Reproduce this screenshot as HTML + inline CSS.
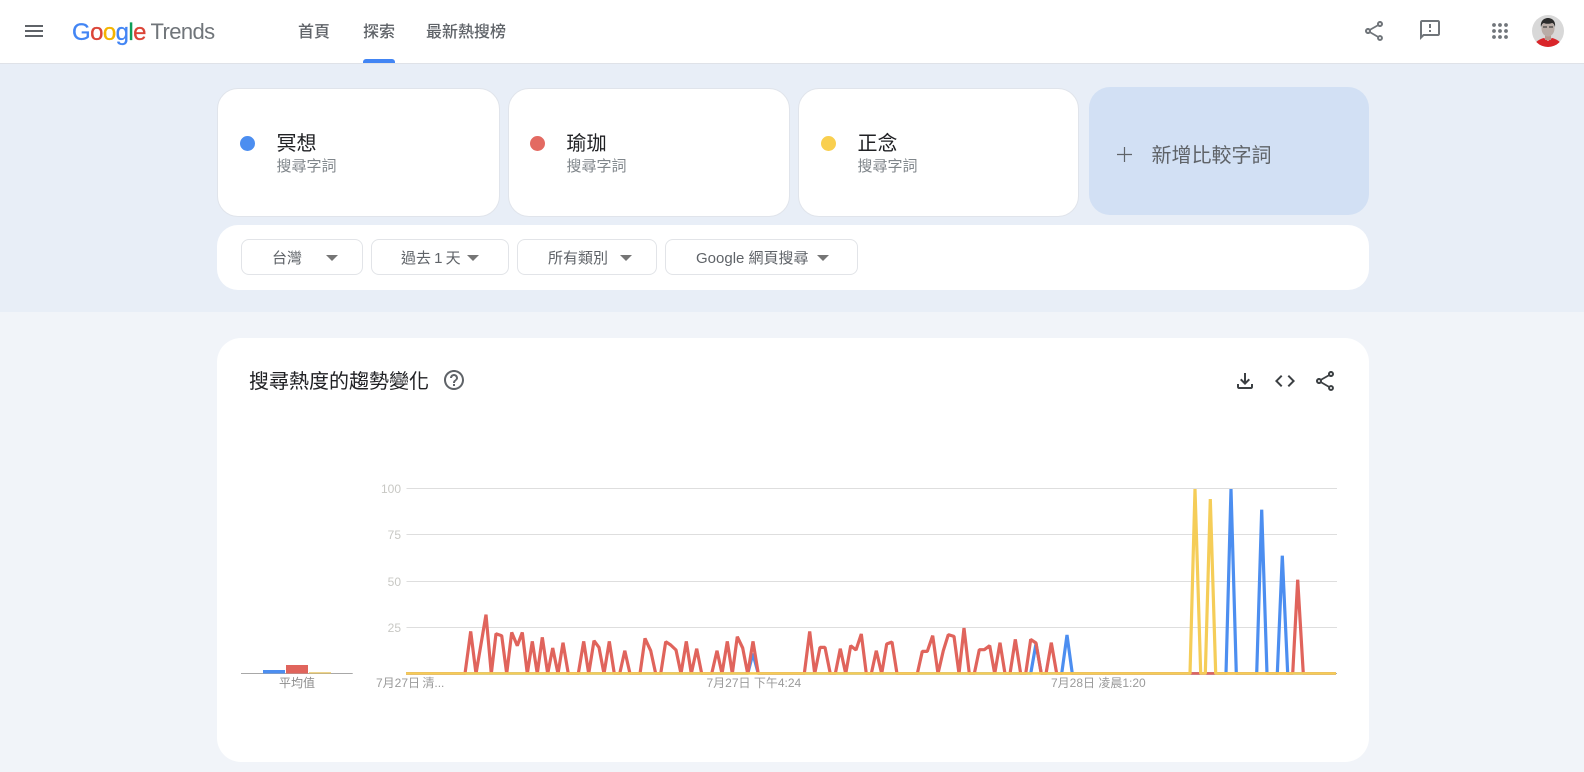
<!DOCTYPE html>
<html lang="zh-Hant"><head><meta charset="utf-8"><title>Google Trends</title>
<style>
html,body{margin:0;padding:0;width:1584px;height:772px;overflow:hidden;background:#f1f4f9;font-family:"Liberation Sans","Noto Sans CJK TC",sans-serif}
div,span{position:absolute;white-space:nowrap}
svg{position:absolute;overflow:visible}
.card{background:#fff;border:1px solid #e0e4eb;box-sizing:border-box;border-radius:21px;top:88px;height:129px}
.dot{width:15px;height:15px;border-radius:50%;top:136px}
.t{font-size:20px;line-height:24px;top:131.5px;color:#202124}
.s{font-size:15px;line-height:20px;top:156.5px;color:#80868b}
.nav{font-size:16px;line-height:24px;top:20.5px;color:#5f6368;font-weight:500}
.btn{top:239px;height:36px;box-sizing:border-box;border:1px solid #e2e4e8;border-radius:8px;background:#fff}
.bt{font-size:15px;line-height:20px;top:248.5px;color:#5f6368;word-spacing:-1px}
.tri{width:0;height:0;border-left:6px solid transparent;border-right:6px solid transparent;border-top:6.5px solid #757575;top:255px}
.yl{font-size:12px;line-height:14px;color:#c8c8c4;text-align:right;width:40px;left:361px}
.xl{font-size:12px;line-height:16px;color:#9a9a9a;top:675px}
</style></head><body>
<div style="left:0;top:0;width:1584px;height:63px;background:#fff;border-bottom:1px solid #dfe2e8;box-sizing:content-box"></div>
<div style="left:0;top:64px;width:1584px;height:248px;background:#e8eef7"></div>

<svg style="left:25px;top:25px" width="18" height="12"><path d="M0 0h18v2H0zM0 5h18v2H0zM0 10h18v2H0z" fill="#5f6368"/></svg>

<div style="left:72px;top:17.5px;font-size:24px;line-height:30px;letter-spacing:-.6px;-webkit-text-stroke:.3px"><span style="position:static;color:#4285f4">G</span><span style="position:static;color:#db4437">o</span><span style="position:static;color:#f4b400">o</span><span style="position:static;color:#4285f4">g</span><span style="position:static;color:#0f9d58">l</span><span style="position:static;color:#db4437">e</span></div>
<div style="left:150.5px;top:18px;font-size:22px;line-height:28px;color:#70757a;letter-spacing:-.6px">Trends</div>

<div class="nav" style="left:298px">首頁</div>
<div class="nav" style="left:363px">探索</div>
<div class="nav" style="left:426px">最新熱搜榜</div>
<div style="left:363px;top:59px;width:32px;height:4px;background:#4285f4;border-radius:3px 3px 0 0"></div>

<svg style="left:1362px;top:19px" width="24" height="24" viewBox="0 0 24 24"><path fill="#70757a" fill-rule="evenodd" d="M18 16.08c-.76 0-1.44.3-1.96.77L8.91 12.7c.05-.23.09-.46.09-.7s-.04-.47-.09-.7l7.05-4.11c.54.5 1.25.81 2.04.81 1.66 0 3-1.34 3-3s-1.34-3-3-3-3 1.34-3 3c0 .24.04.47.09.7L8.04 9.81C7.5 9.31 6.79 9 6 9c-1.66 0-3 1.34-3 3s1.34 3 3 3c.79 0 1.5-.31 2.04-.81l7.12 4.16c-.05.21-.08.43-.08.65 0 1.61 1.31 2.92 2.92 2.92 1.61 0 2.92-1.31 2.92-2.92s-1.31-2.92-2.92-2.92zM18 4c.55 0 1 .45 1 1s-.45 1-1 1-1-.45-1-1 .45-1 1-1zM6 13c-.55 0-1-.45-1-1s.45-1 1-1 1 .45 1 1-.45 1-1 1zm12 7.02c-.55 0-1-.45-1-1s.45-1 1-1 1 .45 1 1-.45 1-1 1z"/></svg>
<svg style="left:1418px;top:18px" width="24" height="24" viewBox="0 0 24 24"><path fill="#70757a" d="M20 2H4c-1.1 0-1.99.9-1.99 2L2 22l4-4h14c1.1 0 2-.9 2-2V4c0-1.1-.9-2-2-2zm0 14H5.17L4 17.17V4h16v12zM11 12h2v2h-2zm0-6h2v4h-2z"/></svg>
<svg style="left:1492px;top:23px" width="16" height="16" viewBox="0 0 16 16" fill="#70757a"><circle cx="2" cy="2" r="1.9"/><circle cx="8" cy="2" r="1.9"/><circle cx="14" cy="2" r="1.9"/><circle cx="2" cy="8" r="1.9"/><circle cx="8" cy="8" r="1.9"/><circle cx="14" cy="8" r="1.9"/><circle cx="2" cy="14" r="1.9"/><circle cx="8" cy="14" r="1.9"/><circle cx="14" cy="14" r="1.9"/></svg>
<svg style="left:1532px;top:15px" width="32" height="32" viewBox="0 0 32 32"><defs><clipPath id="av"><circle cx="16" cy="16" r="16"/></clipPath></defs><g clip-path="url(#av)"><rect width="32" height="32" fill="#d8d8d8"/><path d="M2 32c1-6 6-8 10-9l4 3 4-3c4 1 9 3 10 9z" fill="#d9252a"/><rect x="13" y="19" width="6" height="6" fill="#b79a90"/><ellipse cx="16" cy="13.5" rx="6.5" ry="8" fill="#b9aca6"/><path d="M9 12c-1-6 3-9 7-9s8 3 7 9c-1-3-2-4-3-4-3 1-6 1-8 0-1 0-2 1-3 4z" fill="#2b2b2b"/><path d="M11 12h4M17 12h4" stroke="#444" stroke-width="1.3"/></g></svg>

<div class="card" style="left:217px;width:283px"></div>
<div class="card" style="left:508px;width:282px"></div>
<div class="card" style="left:798px;width:281px"></div>
<div style="left:1089px;top:87px;width:280px;height:128px;border-radius:21px;background:#d2e0f4"></div>

<div class="dot" style="left:240px;background:#4c8ef0"></div>
<div class="t" style="left:276.5px">冥想</div><div class="s" style="left:276.5px">搜尋字詞</div>
<div class="dot" style="left:530px;background:#e36a62"></div>
<div class="t" style="left:566.5px">瑜珈</div><div class="s" style="left:566.5px">搜尋字詞</div>
<div class="dot" style="left:821px;background:#f9cf4f"></div>
<div class="t" style="left:857.5px">正念</div><div class="s" style="left:857.5px">搜尋字詞</div>

<svg style="left:1117px;top:147px" width="15" height="15"><path d="M6.9 0h1.2v6.9H15v1.2H8.1V15H6.9V8.1H0V6.9h6.9z" fill="#5f6368"/></svg>
<div style="left:1151.5px;top:142.5px;font-size:20px;line-height:26px;color:#5f6368">新增比較字詞</div>

<div style="left:217px;top:225px;width:1152px;height:65px;background:#fff;border-radius:21px"></div>
<div class="btn" style="left:241px;width:122px"></div><div class="bt" style="left:272px">台灣</div><div class="tri" style="left:326px"></div>
<div class="btn" style="left:371px;width:138px"></div><div class="bt" style="left:401px">過去 1 天</div><div class="tri" style="left:467px"></div>
<div class="btn" style="left:517px;width:140px"></div><div class="bt" style="left:548px">所有類別</div><div class="tri" style="left:620px"></div>
<div class="btn" style="left:665px;width:193px"></div><div class="bt" style="left:696px;word-spacing:0">Google 網頁搜尋</div><div class="tri" style="left:817px"></div>

<div style="left:217px;top:338px;width:1152px;height:424px;background:#fff;border-radius:24px"></div>
<div style="left:249px;top:368.5px;font-size:20px;line-height:26px;color:#202124">搜尋熱度的趨勢變化</div>
<svg style="left:442px;top:368px" width="24" height="24" viewBox="0 0 24 24"><path fill="#5f6368" d="M11 18h2v-2h-2v2zm1-16C6.48 2 2 6.48 2 12s4.48 10 10 10 10-4.48 10-10S17.52 2 12 2zm0 18c-4.41 0-8-3.59-8-8s3.59-8 8-8 8 3.59 8 8-3.59 8-8 8zm0-14c-2.21 0-4 1.79-4 4h2c0-1.1.9-2 2-2s2 .9 2 2c0 2-3 1.75-3 5h2c0-2.25 3-2.5 3-5 0-2.21-1.79-4-4-4z"/></svg>
<svg style="left:1233px;top:369px" width="24" height="24" viewBox="0 0 24 24"><path fill="#3c4043" d="M18 15v3H6v-3H4v3c0 1.1.9 2 2 2h12c1.1 0 2-.9 2-2v-3h-2zm-1-4l-1.41-1.41L13 12.17V4h-2v8.17L8.41 9.59 7 11l5 5 5-5z"/></svg>
<svg style="left:1273px;top:369px" width="24" height="24" viewBox="0 0 24 24"><path fill="#3c4043" d="M9.4 16.6L4.8 12l4.6-4.6L8 6l-6 6 6 6 1.4-1.4zm5.2 0l4.6-4.6-4.6-4.6L16 6l6 6-6 6-1.4-1.4z"/></svg>
<svg style="left:1313px;top:369px" width="24" height="24" viewBox="0 0 24 24"><path fill="#3c4043" fill-rule="evenodd" d="M18 16.08c-.76 0-1.44.3-1.96.77L8.91 12.7c.05-.23.09-.46.09-.7s-.04-.47-.09-.7l7.05-4.11c.54.5 1.25.81 2.04.81 1.66 0 3-1.34 3-3s-1.34-3-3-3-3 1.34-3 3c0 .24.04.47.09.7L8.04 9.81C7.5 9.31 6.79 9 6 9c-1.66 0-3 1.34-3 3s1.34 3 3 3c.79 0 1.5-.31 2.04-.81l7.12 4.16c-.05.21-.08.43-.08.65 0 1.61 1.31 2.92 2.92 2.92 1.61 0 2.92-1.31 2.92-2.92s-1.31-2.92-2.92-2.92zM18 4c.55 0 1 .45 1 1s-.45 1-1 1-1-.45-1-1 .45-1 1-1zM6 13c-.55 0-1-.45-1-1s.45-1 1-1 1 .45 1 1-.45 1-1 1zm12 7.02c-.55 0-1-.45-1-1s.45-1 1-1 1 .45 1 1-.45 1-1 1z"/></svg>

<div class="yl" style="top:482px">100</div>
<div class="yl" style="top:528px">75</div>
<div class="yl" style="top:575px">50</div>
<div class="yl" style="top:621px">25</div>

<svg style="left:0;top:0" width="1584" height="772" fill="none">
<defs><clipPath id="pl"><rect x="400" y="480" width="940" height="194.7"/></clipPath></defs>
<path d="M406.5 488.5H1337M406.5 534.5H1337M406.5 581.5H1337M406.5 627.5H1337" stroke="#dedede" stroke-width="1"/>
<path d="M406.5 673.5H1337M241 673.5H352.7" stroke="#a8a8a8" stroke-width="1"/>
<rect x="263" y="670" width="22" height="3.5" fill="#4c8ef0"/>
<rect x="286" y="665" width="22" height="8.5" fill="#e0645c"/>
<rect x="309" y="672.3" width="22" height="1.2" fill="#e8c35a"/>
<g clip-path="url(#pl)"><g stroke-width="3.2" stroke-linejoin="bevel" transform="translate(0 .7)">
<polyline stroke="#4c8ef0" points="406,673 747.7,673 752.9,653 758.3,673 1030.7,673 1036,643 1041.3,673 1061.7,673 1067,634.3 1072.3,673 1226,673 1231,488.3 1236.3,673 1256.7,673 1261.7,509 1267,673 1277.3,673 1282.3,555 1287.7,673 1336,673"/>
<polyline stroke="#e0645c" points="406,673 465,673 470.7,630.7 476,673 486,614 491.3,673 496,633 501.7,635 506.7,673 511.7,631.7 517.3,645 522.3,631.7 527.3,673 532.3,640.7 537.3,673 542.3,636.7 547.7,673 552.7,647.3 558,673 563,642 568.3,673 578.3,673 583.7,640.7 588.7,673 594,640 599,646.7 604,673 609.3,640.7 614.3,673 619.7,673 624.8,650 630,673 640,673 645,637.7 650.7,650 655.7,673 660.7,673 665.7,641 670.7,644.3 676,649.3 681,673 686.3,640.7 691.3,673 696.7,648 701.7,673 711.7,673 717,650 722,673 727.3,640.7 732.3,673 737.3,636 742.7,647.3 747.7,673 753,640.7 758.3,673 804.3,673 809.7,630.7 814.7,673 820,646.7 825,646.7 830.3,673 835.3,673 840.3,648 845.7,673 850.7,645 856,649.3 861.3,633.3 866.3,673 871.3,673 876.3,650 881.7,673 886.7,643.3 892,641.3 897,673 917.3,673 922.3,650.7 927.3,650.7 932.7,635 938,673 943.3,650 948.3,634 954,635.7 959,673 964,627.3 969.3,673 974.3,673 979.3,649 984.3,649 989.7,645 994.7,673 1000,642 1005,673 1010,673 1015.3,638.7 1020.7,673 1025.7,673 1030.7,638.7 1036,642.3 1041.3,673 1046,673 1051.3,642 1056.7,673 1292.7,673 1297.7,579 1303.3,673 1336,673"/>
<polyline stroke="#f5cd58" points="406,673 1190,673 1195,488.3 1200.7,673 1205.3,673 1210.3,498.3 1215.7,673 1336,673"/>
</g></g>
</svg>

<div style="left:279px;top:675px;font-size:12px;line-height:16px;color:#8c8c8c">平均值</div>
<div class="xl" style="left:376px;word-spacing:-1px">7月27日 清...</div>
<div class="xl" style="left:706.5px">7月27日 下午4:24</div>
<div class="xl" style="left:1051px">7月28日 凌晨1:20</div>
</body></html>
